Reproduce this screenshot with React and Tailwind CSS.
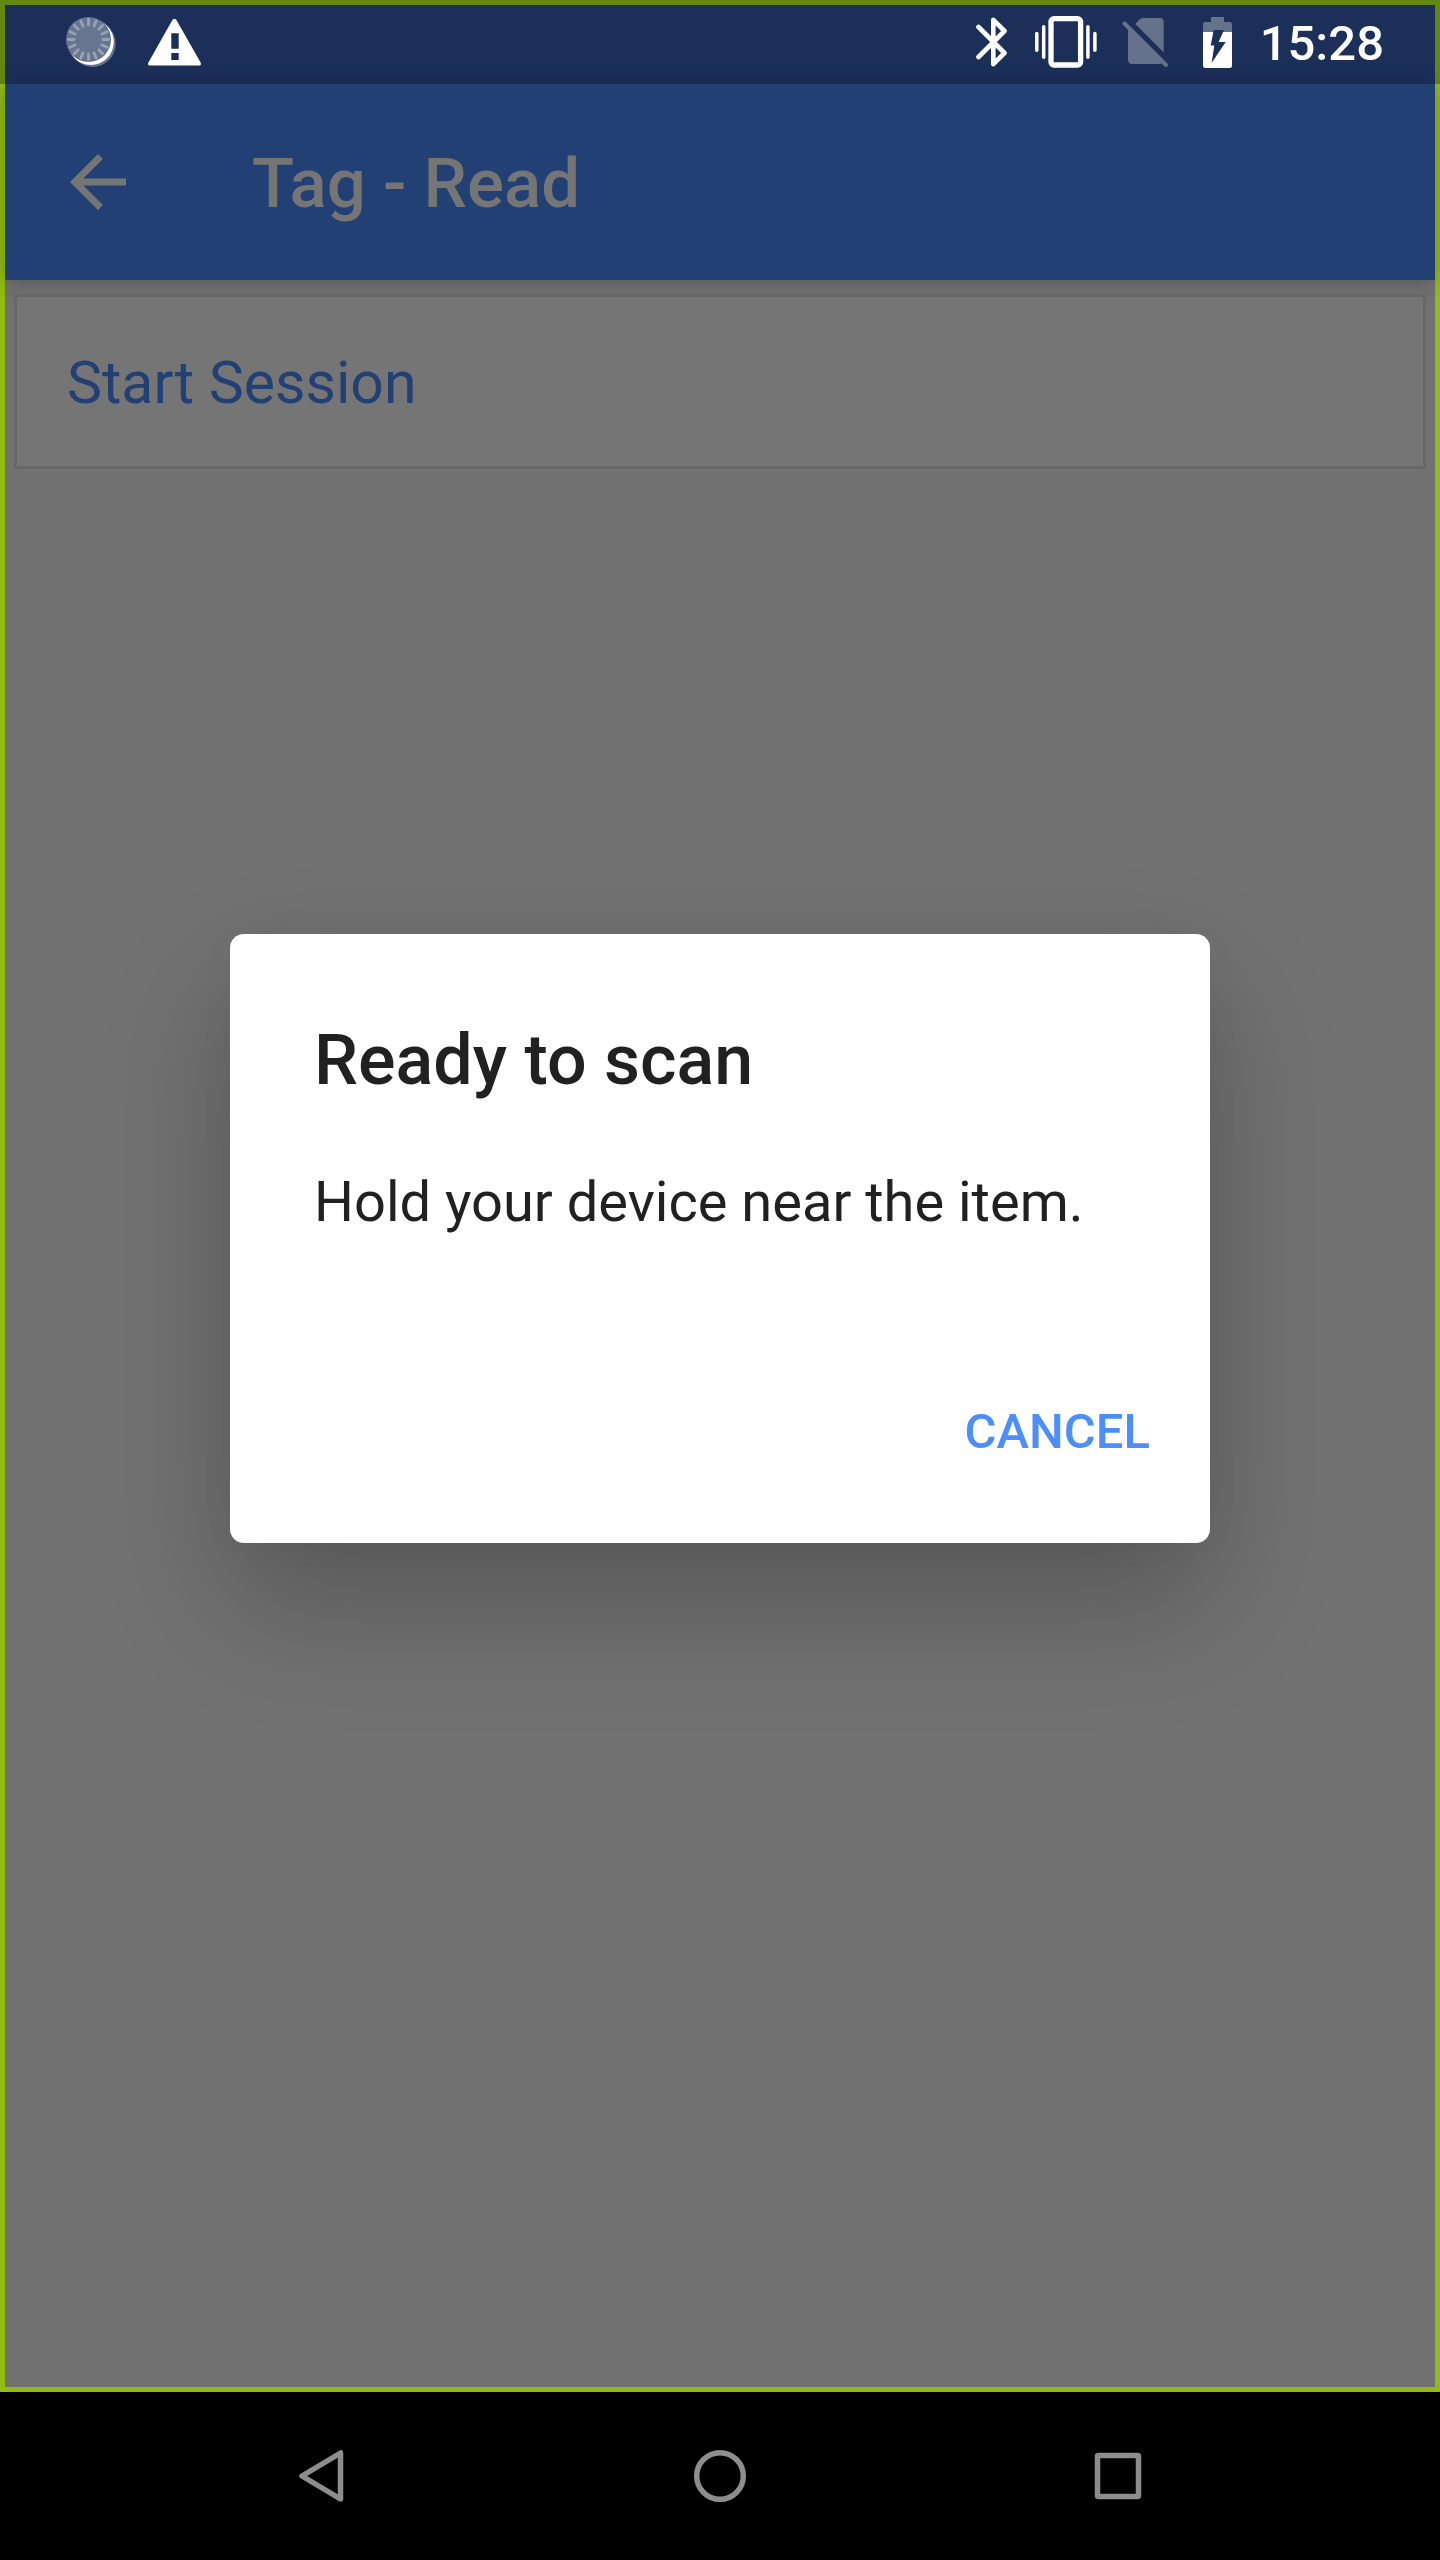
import React from "react";

const rays = Array.from({ length: 16 }, (_, i) => i * 22.5);

function SyncDiscIcon() {
  return (
    <svg width="50" height="51" viewBox="66 17 50 51" aria-hidden="true">
      <circle cx="92.5" cy="43.7" r="23.2" fill="#67758f" />
      <circle cx="90.8" cy="42" r="23" fill="#fff" />
      <circle cx="88.5" cy="39.5" r="22.5" fill="#67758f" />
      <g stroke="#98a3b6" strokeWidth="2.8" strokeLinecap="round">
        {rays.map((a) => (
          <line key={a} x1="88.5" y1="25" x2="88.5" y2="19.4" transform={`rotate(${a} 88.5 39.5)`} />
        ))}
      </g>
    </svg>
  );
}

function WarningIcon() {
  return (
    <svg width="53" height="47" viewBox="148 18 53 47" aria-hidden="true">
      <path
        fill="#fff"
        fillRule="evenodd"
        d="M172.4 18.9Q174.5 16.8 176.4 18.9L200.6 61.4Q201.8 64.5 199 64.6H150Q147.2 64.5 148.4 61.4ZM171.3 32.3V47.8H178.7V32.3ZM171.3 52V59H178.7V52Z"
      />
    </svg>
  );
}

function BluetoothIcon() {
  return (
    <svg width="32" height="51" viewBox="976 17 32 51" fill="none" stroke="#fff" strokeWidth="4.6" strokeLinecap="round" strokeLinejoin="round" aria-hidden="true">
      <path d="M978.5 27L1004.5 53L993.3 64.2V19.8L1004.5 31L978.5 57" />
    </svg>
  );
}

function VibrateIcon() {
  return (
    <svg width="62" height="52" viewBox="1035 16 62 52" fill="none" stroke="#fff" strokeLinecap="round" aria-hidden="true">
      <rect x="1051" y="18.7" width="29.6" height="46.3" rx="3" strokeWidth="5.3" />
      <path strokeWidth="3.5" d="M1036.8 33.5V50.3M1043.7 26.8V57.2M1087.9 26.8V57.2M1094.9 33.5V50.3" />
    </svg>
  );
}

function NoSimIcon() {
  return (
    <svg width="46" height="50" viewBox="1122 18 46 50" aria-hidden="true">
      <path fill="#64728b" d="M1135.3 25L1139.5 20.5Q1141 19 1143.5 19H1160Q1163.7 19 1163.7 22.8V53.3Z" />
      <path fill="#64728b" d="M1128 28.5L1163 62.5Q1162 65 1159.5 65H1132.5Q1128 65 1128 60.5Z" />
      <path stroke="#64728b" strokeWidth="4" strokeLinecap="round" d="M1124.5 24.5L1166 66" />
    </svg>
  );
}

function BatteryIcon() {
  return (
    <svg width="29" height="51" viewBox="1203 16 29 51" aria-hidden="true">
      <path fill="#64728b" d="M1211 16H1224V21H1229.5Q1232 21 1232 23.5V31H1203V23.5Q1203 21 1205.5 21H1211Z" />
      <path fill="#fff" d="M1203 31H1232V64.5Q1232 67 1229.5 67H1205.5Q1203 67 1203 64.5Z" />
      <path fill="#1c2f59" d="M1213.7 29H1224L1218.6 41H1225.7L1211.6 62L1214.3 44.4H1210.7Z" />
    </svg>
  );
}

export default function App() {
  return (
    <div className="flex min-h-screen flex-col bg-black font-['Roboto',sans-serif]">
      <div className="flex h-[84px] shrink-0 items-start justify-between border-x-[5px] border-t-[5px] border-[#63880f] bg-[#1c2f59] pl-[61px] pr-[51px]">
        <div className="flex items-center gap-8 pt-3">
          <SyncDiscIcon />
          <WarningIcon />
        </div>
        <div className="flex items-center pt-[9px] text-white">
          <BluetoothIcon />
          <div className="ml-[27px]"><VibrateIcon /></div>
          <div className="ml-[25px]"><NoSimIcon /></div>
          <div className="ml-[35px]"><BatteryIcon /></div>
          <time className="ml-7 pt-1 text-[49px] font-medium leading-[52px]">15:28</time>
        </div>
      </div>

      <div className="relative flex flex-1 flex-col border-x-[5px] border-b-[5px] border-[#91bc12] bg-[#727272]">
        <header className="relative flex h-[196px] items-center gap-28 bg-[#224074] pl-[51px] text-[#757575] shadow-[0_2px_20px_rgba(0,0,0,0.25)]">
          <button type="button" aria-label="Back">
            <svg className="size-[84px]" viewBox="0 0 24 24" fill="currentColor" aria-hidden="true">
              <path d="M20 11H7.83l5.59-5.59L12 4l-8 8 8 8 1.41-1.41L7.83 13H20v-2z" />
            </svg>
          </button>
          <h1 className="pt-1 text-[69px] font-medium leading-[84px]">Tag - Read</h1>
        </header>

        <main className="px-[9px] pt-3.5">
          <button type="button" className="relative flex h-[175px] w-full items-center border-[3px] border-[#676767] bg-[#757575] px-[50px] pt-0.5 text-left text-[59px] leading-[72px] text-[#224074]">
            Start Session
          </button>
        </main>

        <div className="absolute inset-0 flex items-center justify-center pt-[5px]">
          <section
            role="dialog"
            aria-labelledby="scan-title"
            aria-describedby="scan-text"
            className="flex w-[980px] flex-col rounded-[14px] bg-white pb-[69px] pt-[84px] text-[#212121] shadow-[0_60px_130px_rgba(0,0,0,0.24),0_0_40px_rgba(0,0,0,0.03)]"
          >
            <h2 id="scan-title" className="px-[84px] text-[70px] font-medium leading-[84px]">Ready to scan</h2>
            <p id="scan-text" className="mt-16 px-[84px] text-[56px] leading-[72px]">Hold your device near the item.</p>
            <div className="mt-[152px] flex justify-end pr-[60px]">
              <button type="button" className="text-[49px] font-medium uppercase leading-[84px] text-[#4c8dff]">Cancel</button>
            </div>
          </section>
        </div>
      </div>

      <nav className="flex h-[168px] shrink-0 items-center justify-center text-[#8d8d8d]">
        <button type="button" aria-label="Back" className="flex w-[398px] justify-center">
          <svg width="48" height="54" viewBox="0 0 48 54" fill="none" stroke="currentColor" strokeWidth="5.5" strokeLinejoin="round" aria-hidden="true">
            <path d="M42.5 4V50L4 27Z" />
          </svg>
        </button>
        <button type="button" aria-label="Home" className="flex w-[398px] justify-center">
          <svg width="54" height="54" viewBox="0 0 54 54" fill="none" stroke="currentColor" strokeWidth="5.5" aria-hidden="true">
            <circle cx="27" cy="27" r="23.3" />
          </svg>
        </button>
        <button type="button" aria-label="Recent apps" className="flex w-[398px] justify-center">
          <svg width="48" height="48" viewBox="0 0 48 48" fill="none" stroke="currentColor" strokeWidth="5.5" aria-hidden="true">
            <rect x="3.5" y="3.5" width="41" height="41" rx="1" />
          </svg>
        </button>
      </nav>
    </div>
  );
}
